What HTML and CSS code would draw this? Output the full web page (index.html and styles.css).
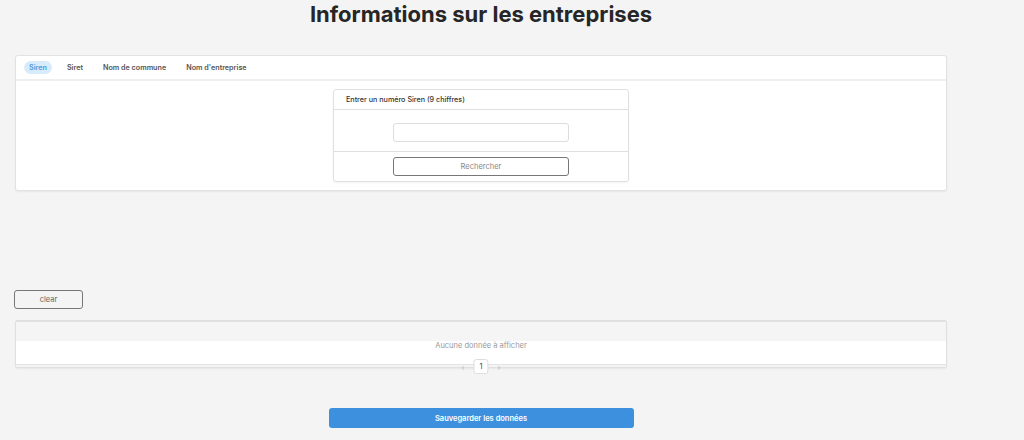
FILE: index.html
```html
<!DOCTYPE html>
<html lang="fr">
<head>
<meta charset="utf-8">
<title>Informations sur les entreprises</title>
<link rel="stylesheet" href="styles.css">
</head>
<body>
<div class="page">
  <h1 class="title">Informations sur les entreprises</h1>

  <section class="card search-card">
    <nav class="tabs">
      <span class="tab active">Siren</span>
      <span class="tab">Siret</span>
      <span class="tab">Nom de commune</span>
      <span class="tab">Nom d'entreprise</span>
    </nav>
    <div class="card-body">
      <div class="form-card">
        <div class="form-head">Entrer un numéro Siren (9 chiffres)</div>
        <div class="form-input-row"><input class="field" type="text"></div>
        <div class="form-foot"><button class="btn-outline">Rechercher</button></div>
      </div>
    </div>
  </section>

  <div class="actions"><button class="btn-clear">clear</button></div>

  <section class="card table-card">
    <div class="thead"></div>
    <div class="tbody"><span class="empty">Aucune donnée à afficher</span></div>
    <div class="tfoot">
      <div class="pager"><span class="arrow">‹</span><span class="page-num">1</span><span class="arrow">›</span></div>
    </div>
  </section>

  <div class="save-row"><button class="btn-save">Sauvegarder les données</button></div>
</div>
</body>
</html>
```

FILE: styles.css
```css
* { box-sizing: border-box; }
html, body { margin: 0; padding: 0; }
body {
  background: #f4f4f4;
  font-family: Inter, "Noto Sans", "Liberation Sans", sans-serif;
  color: #333;
  height: 440px;
  overflow: hidden;
}
.page {
  width: 932px;
  margin: 0 0 0 15px;
}
.title {
  margin: 0;
  font-size: 22px;
  line-height: 28px;
  font-weight: 700;
  color: #262626;
  text-align: center;
}
.card {
  background: #fff;
  border: 1px solid #e2e2e2;
  border-radius: 3px;
  box-shadow: 0 1px 2px rgba(0,0,0,0.06);
}
.search-card { margin-top: 27px; }
.tabs {
  display: flex;
  align-items: center;
  gap: 10px;
  height: 25px;
  padding: 0 8px;
  border-bottom: 2px solid #eeeeee;
}
.tab {
  font-size: 7.2px;
  font-weight: 600;
  color: #555;
  padding: 0 5px;
  height: 13px;
  line-height: 13px;
  border-radius: 7px;
}
.tab.active {
  background: #d7ebfb;
  color: #4a9be2;
}
.card-body {
  display: flex;
  justify-content: center;
  padding: 8px 0 8px;
}
.form-card {
  width: 296px;
  border: 1px solid #e0e0e0;
  border-radius: 3px;
  box-shadow: 0 1px 2px rgba(0,0,0,0.05);
}
.form-head {
  height: 20px;
  line-height: 19px;
  padding: 0 12px;
  font-size: 7.2px;
  font-weight: 500;
  color: #333;
  border-bottom: 1px solid #e0e0e0;
}
.form-input-row {
  display: flex;
  justify-content: center;
  padding: 13px 0 9px;
  border-bottom: 1px solid #e0e0e0;
}
.field {
  width: 176px;
  height: 19px;
  border: 1px solid #dddddd;
  border-radius: 3px;
  background: #fff;
  margin: 0;
}
.form-foot {
  display: flex;
  justify-content: center;
  padding: 5px 0 5px;
}
.btn-outline {
  width: 176px;
  height: 19px;
  margin: 0;
  padding: 0;
  border: 1px solid #777;
  border-radius: 3px;
  background: #fff;
  font-family: inherit;
  font-size: 7.5px;
  color: #888;
}
.actions {
  display: flex;
  margin-top: 99px;
  margin-left: -1px;
}
.btn-clear {
  width: 69px;
  height: 19px;
  margin: 0;
  padding: 0;
  border: 1px solid #777;
  border-radius: 3px;
  background: #f4f4f4;
  font-family: inherit;
  font-size: 7.5px;
  color: #666;
}
.table-card {
  margin-top: 11px;
  border-color: #e0e0e0;
  border-width: 2px 1px 1px 1px;
  position: relative;
}
.thead {
  height: 21px;
  background: #f5f5f5;
}
.tbody {
  height: 23px;
  background: #fff;
  text-align: center;
}
.empty {
  display: block;
  margin-top: -2px;
  line-height: 10px;
  font-size: 7.5px;
  color: #999;
}
.tfoot {
  height: 3px;
  border-top: 1px solid #e4e4e4;
  background: #f4f4f4;
  position: relative;
}
.pager {
  position: absolute;
  left: 50%;
  top: -6px;
  transform: translateX(-50%);
  display: flex;
  align-items: center;
  gap: 9px;
}
.arrow {
  font-size: 8px;
  color: #bbb;
  line-height: 8px;
}
.page-num {
  width: 15px;
  height: 15px;
  line-height: 14px;
  text-align: center;
  font-size: 7.5px;
  color: #444;
  background: #fff;
  border: 1px solid #ddd;
  border-radius: 3px;
}
.save-row {
  display: flex;
  justify-content: center;
  margin-top: 40px;
}
.btn-save {
  width: 305px;
  height: 20px;
  margin: 0;
  padding: 0;
  border: 0;
  border-radius: 3px;
  background: #3c90dd;
  color: #fff;
  font-family: inherit;
  font-size: 7.5px;
  font-weight: 600;
}
```
